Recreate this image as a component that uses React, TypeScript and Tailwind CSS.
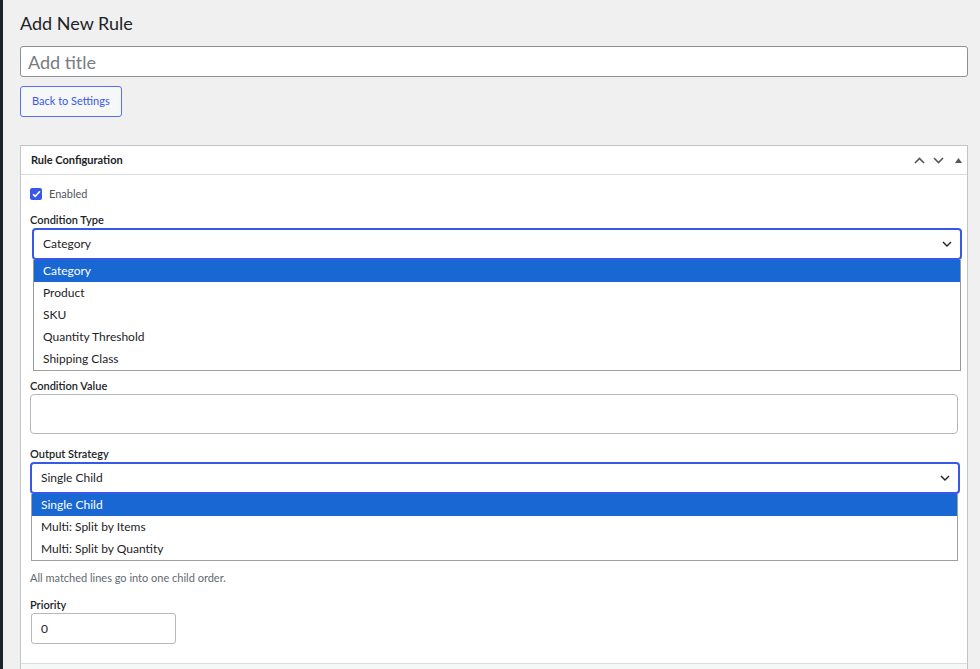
import { useState } from 'react';

const CONDITION_TYPES = ['Category', 'Product', 'SKU', 'Quantity Threshold', 'Shipping Class'];
const STRATEGIES = ['Single Child', 'Multi: Split by Items', 'Multi: Split by Quantity'];

function Chevron({ className = '' }: { className?: string }) {
  return (
    <svg width="10" height="6" viewBox="0 0 10 6" className={className}>
      <path d="M1 1l4 4 4-4" fill="none" stroke="currentColor" strokeWidth="1.4" />
    </svg>
  );
}

interface SelectProps {
  options: string[];
  value: string;
  className?: string;
  listClassName?: string;
}

function OpenSelect({ options, value, className = '', listClassName = '' }: SelectProps) {
  return (
    <div className={`relative ${className}`}>
      <div className="h-[32px] flex items-center justify-between border-2 border-[#3858e9] rounded-[4px] pl-[9px] pr-[8px] bg-white text-[12px] text-[#1d2327]">
        <span>{value}</span>
        <Chevron className="text-[#1d2327]" />
      </div>
      {/* open option list, sits over the fields below */}
      <div className={`absolute top-full left-[1px] z-10 bg-white border border-t-0 border-[#a0a0a0] ${listClassName}`}>
        {options.map((o) => (
          <div
            key={o}
            className={`h-[22px] flex items-center pl-[9px] text-[12px] ${o === value ? 'bg-[#1967d2] text-white' : 'text-[#1d2327]'}`}
          >
            {o}
          </div>
        ))}
      </div>
    </div>
  );
}

export default function App() {
  const [enabled, setEnabled] = useState(true);

  return (
    <div className="min-h-screen flex bg-[#f0f0f1] font-['Lato',sans-serif] text-[#1d2327]">
      <div className="w-[3px] bg-[#1d2327] shrink-0" />

      <main className="flex-1 pl-[17px] pr-[12px] pt-[12px]">
        <h1 className="text-[18px] leading-[22px] font-normal">Add New Rule</h1>

        <input
          placeholder="Add title"
          className="mt-[12px] w-full h-[31px] border border-[#8c8f94] rounded-[3px] bg-white px-[7px] text-[18px] placeholder:text-[#787c82] outline-none"
        />

        <button className="mt-[9px] h-[31px] px-[11px] border border-[#5b6ef0] rounded-[3px] bg-[#f6f7f7] text-[11px] text-[#3858e9]">
          Back to Settings
        </button>

        {/* Rule Configuration panel */}
        <section className="mt-[28px] bg-white border border-[#c3c4c7]">
          <div className="h-[29px] flex items-center justify-between border-b border-[#dcdcde] pl-[10px] pr-[5px]">
            <h2 className="text-[11px] font-bold">Rule Configuration</h2>
            <div className="flex items-center gap-[8px] text-[#50575e]">
              <svg width="11" height="7" viewBox="0 0 11 7">
                <path d="M1 6l4.5-4.5L10 6" fill="none" stroke="currentColor" strokeWidth="1.6" />
              </svg>
              <svg width="11" height="7" viewBox="0 0 11 7">
                <path d="M1 1l4.5 4.5L10 1" fill="none" stroke="currentColor" strokeWidth="1.6" />
              </svg>
              <svg width="7" height="5" viewBox="0 0 7 5" className="ml-[3px]">
                <path d="M0 5L3.5 0L7 5z" fill="currentColor" />
              </svg>
            </div>
          </div>

          <div className="px-[9px] pt-[12px] pb-[19px]">
            <label className="flex items-center gap-[7px] h-[14px]">
              <span
                onClick={() => setEnabled(!enabled)}
                className={`w-[12px] h-[12px] rounded-[2px] flex items-center justify-center ${enabled ? 'bg-[#3858e9]' : 'border border-[#8c8f94]'}`}
              >
                {enabled && (
                  <svg width="9" height="8" viewBox="0 0 9 8">
                    <path d="M1 4.2l2.2 2.2L8 1.2" fill="none" stroke="white" strokeWidth="1.6" />
                  </svg>
                )}
              </span>
              <span className="text-[11px] text-[#50575e]">Enabled</span>
            </label>

            <p className="mt-[11px] text-[11px] leading-[16px] font-semibold">Condition Type</p>
            <OpenSelect
              options={CONDITION_TYPES}
              value="Category"
              className="ml-[2px] mr-[-4px]"
              listClassName="w-[928px] border-l-[#999] border-r-[#999]"
            />

            <div className="h-[118px]" />

            <p className="text-[11px] leading-[16px] font-semibold">Condition Value</p>
            <textarea className="block w-full h-[40px] border border-[#b5b8bc] rounded-[4px] resize-none outline-none" />

            <p className="mt-[12px] text-[11px] leading-[16px] font-semibold">Output Strategy</p>
            <OpenSelect
              options={STRATEGIES}
              value="Single Child"
              className="mr-[-2px]"
              listClassName="w-[927px]"
            />

            <div className="h-[76px]" />

            <p className="text-[11px] leading-[16px] text-[#646970]">All matched lines go into one child order.</p>

            <p className="mt-[11px] text-[11px] leading-[16px] font-semibold">Priority</p>
            <input
              defaultValue="0"
              className="block ml-[1px] w-[145px] h-[31px] border border-[#b5b8bc] rounded-[3px] px-[9px] text-[12px] outline-none"
            />
          </div>

          <div className="h-[20px] border-t border-[#dcdcde] bg-[#f6f7f7]" />
        </section>
      </main>
    </div>
  );
}
